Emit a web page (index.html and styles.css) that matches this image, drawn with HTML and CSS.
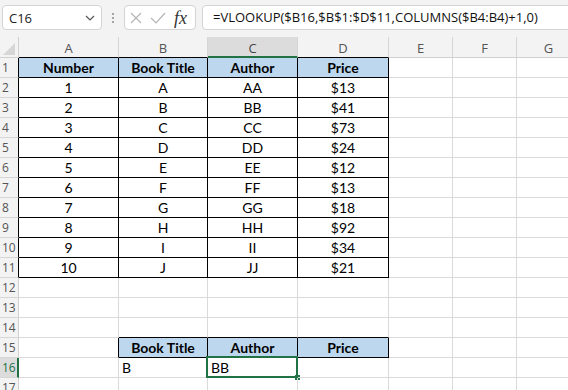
FILE: index.html
```html
<!DOCTYPE html>
<html>
<head>
<meta charset="utf-8">
<link rel="stylesheet" href="styles.css">
</head>
<body>
<div class="toolbar">
  <div class="namebox">
    <span class="name">C16</span>
    <svg class="chev" width="10" height="6" viewBox="0 0 10 6"><path d="M1 1 L5 5 L9 1" fill="none" stroke="#555" stroke-width="1.2"/></svg>
  </div>
  <div class="grip"><span></span><span></span><span></span></div>
  <div class="fxbox">
    <svg width="16" height="12" viewBox="0 0 16 12"><path d="M3 1 L13 11 M13 1 L3 11" fill="none" stroke="#b5b5b5" stroke-width="1.2"/></svg>
    <svg width="18" height="12" viewBox="0 0 18 12"><path d="M2 6 L7 11 L16 1" fill="none" stroke="#b5b5b5" stroke-width="1.2"/></svg>
    <span class="fx">fx</span>
  </div>
  <div class="formula">=VLOOKUP($B16,$B$1:$D$11,COLUMNS($B4:B4)+1,0)</div>
</div>
<div class="sheet">
  <div class="c corner"><svg width="12" height="12" viewBox="0 0 12 12"><path d="M12 0 L12 12 L0 12 Z" fill="#d6d6d6"/></svg></div>
  <div class="c ch kb">A</div><div class="c ch kb">B</div><div class="c ch sel">C</div><div class="c ch kb">D</div><div class="c ch">E</div><div class="c ch">F</div><div class="c ch">G</div>

  <div class="c rh k">1</div><div class="c t hd">Number</div><div class="c t hd">Book Title</div><div class="c t hd">Author</div><div class="c t hd">Price</div><div class="c"></div><div class="c"></div><div class="c"></div>
  <div class="c rh k">2</div><div class="c t">1</div><div class="c t">A</div><div class="c t">AA</div><div class="c t">$13</div><div class="c"></div><div class="c"></div><div class="c"></div>
  <div class="c rh k">3</div><div class="c t">2</div><div class="c t">B</div><div class="c t">BB</div><div class="c t">$41</div><div class="c"></div><div class="c"></div><div class="c"></div>
  <div class="c rh k">4</div><div class="c t">3</div><div class="c t">C</div><div class="c t">CC</div><div class="c t">$73</div><div class="c"></div><div class="c"></div><div class="c"></div>
  <div class="c rh k">5</div><div class="c t">4</div><div class="c t">D</div><div class="c t">DD</div><div class="c t">$24</div><div class="c"></div><div class="c"></div><div class="c"></div>
  <div class="c rh k">6</div><div class="c t">5</div><div class="c t">E</div><div class="c t">EE</div><div class="c t">$12</div><div class="c"></div><div class="c"></div><div class="c"></div>
  <div class="c rh k">7</div><div class="c t">6</div><div class="c t">F</div><div class="c t">FF</div><div class="c t">$13</div><div class="c"></div><div class="c"></div><div class="c"></div>
  <div class="c rh k">8</div><div class="c t">7</div><div class="c t">G</div><div class="c t">GG</div><div class="c t">$18</div><div class="c"></div><div class="c"></div><div class="c"></div>
  <div class="c rh k">9</div><div class="c t">8</div><div class="c t">H</div><div class="c t">HH</div><div class="c t">$92</div><div class="c"></div><div class="c"></div><div class="c"></div>
  <div class="c rh k">10</div><div class="c t">9</div><div class="c t">I</div><div class="c t">II</div><div class="c t">$34</div><div class="c"></div><div class="c"></div><div class="c"></div>
  <div class="c rh k">11</div><div class="c t">10</div><div class="c t">J</div><div class="c t">JJ</div><div class="c t">$21</div><div class="c"></div><div class="c"></div><div class="c"></div>
  <div class="c rh">12</div><div class="c"></div><div class="c"></div><div class="c"></div><div class="c"></div><div class="c"></div><div class="c"></div><div class="c"></div>
  <div class="c rh">13</div><div class="c"></div><div class="c"></div><div class="c"></div><div class="c"></div><div class="c"></div><div class="c"></div><div class="c"></div>
  <div class="c rh">14</div><div class="c"></div><div class="c kb"></div><div class="c kb"></div><div class="c kb"></div><div class="c"></div><div class="c"></div><div class="c"></div>
  <div class="c rh">15</div><div class="c kr"></div><div class="c t hd">Book Title</div><div class="c t hd">Author</div><div class="c t hd">Price</div><div class="c"></div><div class="c"></div><div class="c"></div>
  <div class="c rh rsel">16</div><div class="c"></div><div class="c left">B</div><div class="c left active">BB</div><div class="c"></div><div class="c"></div><div class="c"></div><div class="c"></div>
  <div class="c rh">17</div><div class="c"></div><div class="c"></div><div class="c"></div><div class="c"></div><div class="c"></div><div class="c"></div><div class="c"></div>
</div>
</body>
</html>
```
FILE: styles.css
```css
html, body {
  margin: 0;
  padding: 0;
  background: #ffffff;
  overflow: hidden;
}
body {
  width: 568px;
  height: 390px;
  font-family: Lato, "Liberation Sans", sans-serif;
}
.toolbar {
  height: 37px;
  box-sizing: border-box;
  background: #f3f3f3;
  display: flex;
  align-items: flex-start;
  padding: 5px 0 0 2px;
}
.namebox {
  width: 100px;
  height: 25px;
  box-sizing: border-box;
  border: 1px solid #d4d4d4;
  border-radius: 4px;
  background: #fff;
  display: flex;
  align-items: center;
  justify-content: space-between;
  padding: 0 6px 0 6px;
  font-family: "Open Sans", "Liberation Sans", sans-serif;
  font-size: 13px;
  color: #222;
}
.chev { margin-top: 1px; }
.grip {
  width: 22px;
  height: 25px;
  display: flex;
  flex-direction: column;
  align-items: center;
  justify-content: center;
  gap: 2px;
}
.grip span {
  width: 2px;
  height: 2px;
  background: #8a8a8a;
  border-radius: 1px;
}
.fxbox {
  width: 72px;
  height: 25px;
  box-sizing: border-box;
  border: 1px solid #d4d4d4;
  border-radius: 4px;
  background: #fff;
  display: flex;
  align-items: center;
  padding: 0 0 0 3px;
  gap: 5px;
}
.fx {
  font-family: "Liberation Serif", serif;
  font-style: italic;
  font-size: 18px;
  color: #333;
  margin-left: 2px;
  line-height: 1;
}
.formula {
  flex: 1;
  margin-left: 6px;
  margin-right: -10px;
  height: 25px;
  box-sizing: border-box;
  border: 1px solid #d4d4d4;
  border-radius: 4px;
  background: #fff;
  padding-left: 10px;
  line-height: 23px;
  font-family: "Open Sans", "Liberation Sans", sans-serif;
  font-size: 13px;
  color: #111;
  white-space: nowrap;
}
.sheet {
  display: grid;
  grid-template-columns: 19px 100px 89px 90px 91px 64px 64px 64px;
  grid-template-rows: 21px;
  grid-auto-rows: 20px;
}
.c {
  box-sizing: border-box;
  border-right: 1px solid #dadada;
  border-bottom: 1px solid #dadada;
  font-size: 14px;
  color: #000;
  display: flex;
  align-items: center;
  justify-content: center;
  white-space: nowrap;
  position: relative;
}
.corner {
  background: #f3f3f3;
  border-right-color: #d0d0d0;
  border-bottom-color: #d0d0d0;
  align-items: flex-end;
  justify-content: flex-end;
  padding: 0 3px 2px 0;
}
.ch {
  background: #f3f3f3;
  color: #555;
  font-family: "Open Sans", "Liberation Sans", sans-serif;
  font-size: 13px;
  border-right-color: #d6d6d6;
  border-bottom-color: #d0d0d0;
  padding-top: 2px;
}
.ch.sel {
  background: #dcdcdc;
  border-bottom: 2px solid #217346;
  color: #444;
}
.rh {
  background: #f3f3f3;
  color: #555;
  font-family: "Open Sans", "Liberation Sans", sans-serif;
  font-size: 12px;
  border-right-color: #d0d0d0;
  border-bottom-color: #d6d6d6;
  justify-content: flex-start;
  padding-left: 2px;
}
.rh.k { border-right-color: #000; }
.rh.rsel {
  background: #dcdcdc;
  color: #217346;
  border-right: 2px solid #217346;
}
.kb { border-bottom-color: #000; }
.ch.kb { border-bottom-color: #000; }
.kr { border-right-color: #000; }
.t {
  border-right-color: #000;
  border-bottom-color: #000;
}
.hd {
  background: #bdd7ee;
  font-weight: bold;
}
.left {
  justify-content: flex-start;
  padding-left: 3px;
}
.active::before {
  content: "";
  position: absolute;
  left: -2px;
  top: -2px;
  right: -1px;
  bottom: -1px;
  border: 2px solid #217346;
  pointer-events: none;
}
.active::after {
  content: "";
  position: absolute;
  right: -3px;
  bottom: -3px;
  width: 5px;
  height: 5px;
  background: #217346;
}
```
